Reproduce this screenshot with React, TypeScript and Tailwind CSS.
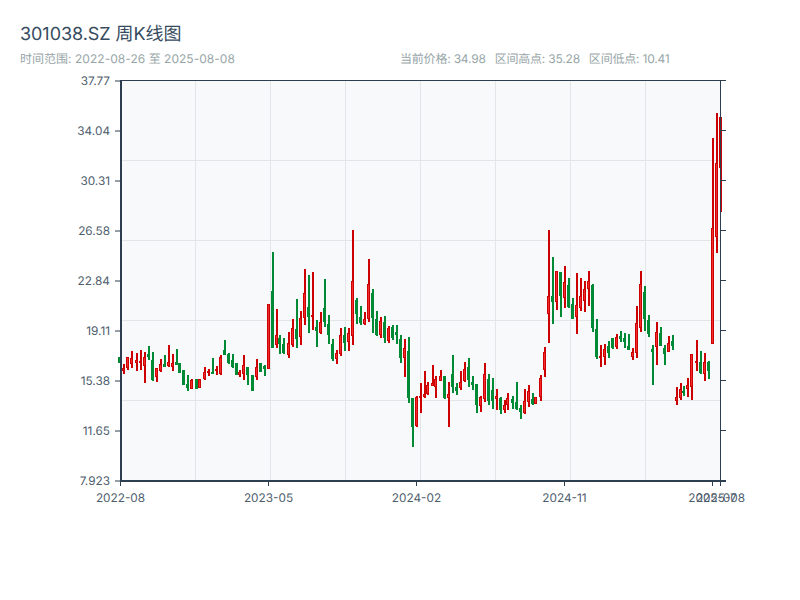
type Row = [number, "r" | "g", number, number, number, number];
type Candle = { x: number; up: boolean; top: number; bottom: number; high: number; low: number };

// rows are read off 3x crops of the chart: [x, colour, body top, body bottom, wick top, wick bottom]
const crop = (ox: number, oy: number, rows: Row[]): Candle[] =>
  rows.map(([x, c, top, bottom, high, low]) => ({
    x: Math.round(ox + x / 3),
    up: c === "r",
    top: Math.round(oy + top / 3),
    bottom: Math.round(oy + bottom / 3),
    high: Math.round(oy + high / 3),
    low: Math.round(oy + low / 3),
  }));

const CANDLES: Candle[] = [
  ...crop(110, 340, [
    [30, "g", 50, 68, 50, 68], [43, "r", 85, 93, 72, 102], [55, "r", 52, 84, 52, 90], [67, "r", 55, 72, 33, 85],
    [80, "r", 60, 68, 40, 92], [92, "r", 63, 68, 30, 90], [104, "r", 52, 78, 37, 128], [116, "g", 42, 50, 18, 60],
    [128, "g", 60, 120, 37, 122], [140, "r", 85, 112, 85, 125], [153, "r", 72, 92, 58, 97], [165, "g", 72, 80, 45, 82],
    [177, "r", 67, 78, 15, 80], [189, "r", 70, 80, 42, 92], [200, "g", 65, 75, 27, 75], [211, "g", 68, 98, 68, 98],
    [223, "g", 90, 135, 90, 135], [235, "g", 132, 145, 105, 152], [247, "r", 120, 147, 118, 148], [260, "g", 117, 147, 117, 147],
    [271, "r", 118, 143, 118, 143], [284, "r", 95, 118, 82, 120], [296, "r", 92, 100, 88, 108], [308, "g", 95, 102, 55, 102],
    [320, "r", 88, 93, 78, 105], [332, "r", 52, 102, 45, 105], [345, "g", 30, 45, 0, 45], [356, "g", 42, 70, 40, 72],
    [368, "g", 60, 80, 42, 85], [380, "g", 70, 105, 70, 105], [391, "r", 95, 105, 90, 112], [403, "r", 75, 102, 45, 120],
    [415, "g", 82, 105, 82, 135], [428, "g", 105, 152, 105, 152], [440, "r", 80, 110, 57, 120],
  ]),
  ...crop(260, 220, [
    [2, "g", 430, 455, 430, 455], [14, "g", 437, 447, 435, 467], [28, "r", 253, 448, 253, 448], [40, "g", 213, 383, 97, 383],
    [50, "r", 346, 375, 268, 383], [61, "g", 355, 372, 346, 401], [73, "g", 372, 400, 355, 401], [86, "r", 370, 405, 336, 413],
    [98, "r", 325, 375, 298, 380], [110, "g", 328, 356, 238, 385], [122, "r", 295, 352, 274, 375], [134, "r", 220, 295, 148, 315],
    [146, "g", 262, 290, 165, 338], [158, "r", 285, 290, 157, 330], [170, "g", 320, 332, 300, 381], [182, "r", 305, 340, 277, 342],
    [194, "g", 265, 305, 178, 320], [206, "g", 312, 345, 285, 372], [218, "g", 372, 418, 358, 423], [230, "r", 400, 418, 390, 431],
    [242, "r", 346, 403, 325, 407], [254, "g", 345, 368, 322, 392], [266, "r", 340, 367, 325, 393], [278, "r", 184, 347, 30, 375],
    [290, "g", 240, 282, 235, 311], [302, "g", 290, 310, 258, 315], [314, "r", 298, 313, 277, 315], [326, "r", 193, 298, 118, 305],
    [338, "g", 220, 295, 208, 338], [350, "g", 298, 345, 273, 349], [362, "r", 304, 345, 292, 353], [374, "g", 305, 355, 289, 369],
    [386, "r", 325, 362, 319, 369], [398, "g", 322, 355, 316, 360], [410, "g", 337, 345, 316, 372], [422, "g", 358, 415, 346, 429],
    [434, "r", 385, 415, 358, 470], [446, "g", 393, 534, 352, 548],
  ]),
  ...crop(400, 330, [
    [38, "g", 205, 290, 205, 350], [50, "r", 200, 288, 198, 290], [62, "r", 198, 204, 160, 248], [74, "r", 193, 200, 124, 203],
    [85, "r", 165, 193, 157, 195], [98, "r", 158, 167, 106, 168], [107, "r", 148, 170, 138, 203], [122, "r", 138, 152, 120, 153],
    [134, "g", 138, 205, 137, 207], [146, "r", 193, 205, 156, 290], [158, "g", 133, 170, 75, 188], [170, "g", 172, 182, 158, 195],
    [182, "r", 155, 175, 124, 180], [194, "r", 118, 152, 97, 155], [206, "g", 110, 150, 85, 172], [218, "g", 157, 165, 138, 180],
    [230, "g", 162, 225, 162, 248], [242, "r", 201, 227, 198, 245], [254, "r", 133, 208, 100, 215], [266, "g", 148, 212, 132, 224],
    [278, "g", 180, 212, 144, 238], [290, "r", 198, 206, 178, 240], [302, "g", 205, 240, 202, 251], [314, "r", 226, 240, 210, 248],
    [324, "r", 203, 226, 190, 240], [338, "g", 208, 218, 198, 237], [350, "g", 215, 238, 156, 240], [362, "g", 235, 245, 225, 266],
    [374, "r", 214, 250, 178, 251], [386, "r", 182, 215, 166, 230], [398, "g", 208, 222, 190, 225],
  ]),
  ...crop(535, 220, [
    [4, "r", 532, 553, 530, 553], [17, "r", 475, 532, 465, 543], [29, "r", 397, 450, 381, 470], [41, "r", 228, 283, 30, 368],
    [53, "g", 228, 245, 112, 312], [65, "r", 154, 245, 154, 270], [77, "g", 156, 228, 156, 290], [89, "r", 187, 235, 138, 263],
    [101, "g", 195, 262, 175, 263], [113, "g", 253, 296, 235, 298], [125, "r", 255, 290, 160, 342], [137, "r", 229, 265, 175, 272],
    [149, "r", 208, 242, 183, 275], [161, "r", 184, 208, 153, 257], [173, "g", 195, 323, 192, 335], [185, "g", 328, 412, 297, 417],
    [197, "r", 408, 413, 376, 440], [209, "r", 388, 410, 373, 434], [221, "g", 378, 398, 363, 413], [233, "g", 355, 385, 355, 388],
    [245, "r", 352, 382, 343, 387], [257, "g", 348, 357, 333, 365], [269, "g", 354, 365, 339, 385], [281, "g", 378, 390, 342, 390],
    [293, "r", 397, 410, 385, 420], [305, "r", 310, 400, 258, 413], [317, "r", 193, 323, 153, 335], [329, "g", 215, 298, 198, 333],
    [341, "g", 300, 342, 285, 351], [353, "g", 388, 396, 375, 495], [365, "r", 337, 382, 307, 435], [377, "g", 340, 377, 321, 378],
    [389, "g", 385, 403, 375, 435], [401, "r", 370, 395, 348, 395], [413, "g", 362, 377, 345, 390], [425, "r", 532, 542, 502, 555],
    [437, "r", 508, 535, 489, 540], [448, "g", 512, 520, 498, 528],
  ]),
  ...crop(660, 100, [
    [85, "r", 856, 868, 835, 890], [97, "r", 763, 862, 763, 899], [110, "r", 784, 788, 720, 812], [122, "g", 785, 820, 753, 822],
    [134, "r", 785, 823, 760, 842], [146, "g", 787, 812, 783, 836], [158, "r", 385, 733, 115, 733], [170, "r", 190, 412, 40, 460],
    [182, "r", 52, 204, 52, 335],
  ]),
];

const Y_LABELS = ["37.77", "34.04", "30.31", "26.58", "22.84", "19.11", "15.38", "11.65", "7.923"];
const X_LABELS: [number, string][] = [[120.5, "2022-08"], [268.5, "2023-05"], [416.5, "2024-02"], [564.5, "2024-11"], [712.5, "2025-07"], [720.5, "2025-08"]];
const FONT = "font-['Inter','Noto_Sans_CJK_SC',sans-serif] [text-rendering:geometricPrecision]";

function CandleMark({ c }: { c: Candle }) {
  const color = c.up ? "fill-[#cc0000]" : "fill-[#008a36]";
  return (
    <g shapeRendering="crispEdges">
      <rect x={c.x - 1} y={c.high} width={2} height={c.low - c.high} className={color} />
      <rect x={c.x - 2} y={c.top} width={3} height={Math.max(c.bottom - c.top, 1)} className={color} />
      {c.up && c.bottom - c.top > 2 && (
        <rect x={c.x - 1} y={c.top + 1} width={1} height={c.bottom - c.top - 2} className="fill-[#f02c2c]" />
      )}
    </g>
  );
}

function KChart() {
  return (
    <svg width={800} height={530} viewBox="0 70 800 530" className="block">
      <rect x={120} y={80} width={600} height={400} className="fill-[#f8f9fb]" />
      {[195.5, 270.5, 345.5, 420.5, 495.5, 570.5, 645.5].map((x) => (
        <line key={x} x1={x} x2={x} y1={80} y2={480} className="stroke-[#e3e5eb]" />
      ))}
      {[160.5, 240.5, 320.5, 400.5].map((y) => (
        <line key={y} x1={120} x2={720} y1={y} y2={y} className="stroke-[#e3e5eb]" />
      ))}
      {CANDLES.map((c) => (
        <CandleMark key={c.x} c={c} />
      ))}
      <g className="stroke-[#2c3e50]">
        <line x1={120} x2={726} y1={80.5} y2={80.5} />
        <line x1={720.5} x2={720.5} y1={80} y2={481} />
        <line x1={121} x2={121} y1={80} y2={482} strokeWidth={2} />
        <line x1={120} x2={726} y1={481} y2={481} strokeWidth={2} />
        {Y_LABELS.map((_, i) => (
          <line key={i} x1={115} x2={120} y1={81 + i * 50} y2={81 + i * 50} />
        ))}
        {Y_LABELS.slice(1, 8).map((_, i) => (
          <line key={i} x1={721} x2={726} y1={130.5 + i * 50} y2={130.5 + i * 50} />
        ))}
        {X_LABELS.map(([x]) => (
          <line key={x} x1={x} x2={x} y1={482} y2={486} />
        ))}
      </g>
      <g className={`${FONT} fill-[#4d5c6c] text-[11.8px]`}>
        {Y_LABELS.map((v, i) => (
          <text key={v} x={110} y={85 + i * 50} textAnchor="end">{v}</text>
        ))}
        {X_LABELS.map(([x, v]) => (
          <text key={v} x={x} y={501.5} textAnchor="middle">{v}</text>
        ))}
      </g>
    </svg>
  );
}

export default function App() {
  return (
    <div className={`${FONT} w-[800px] h-[600px] bg-white overflow-hidden`}>
      <div className="h-[70px] px-5 pt-[24px]">
        <h1 className="text-[18px] leading-[22px] font-normal tracking-[-0.05px] text-[#364b60]">301038.SZ 周K线图</h1>
        <div className="flex mt-[4px] text-[12px] leading-[17px] text-[#98a6a8]">
          <span className="w-[380px] tracking-[0.03px]">时间范围: 2022-08-26 至 2025-08-08</span>
          <div className="flex gap-[9px] tracking-[-0.2px]">
            <span>当前价格: 34.98</span>
            <span>区间高点: 35.28</span>
            <span>区间低点: 10.41</span>
          </div>
        </div>
      </div>
      <KChart />
    </div>
  );
}
